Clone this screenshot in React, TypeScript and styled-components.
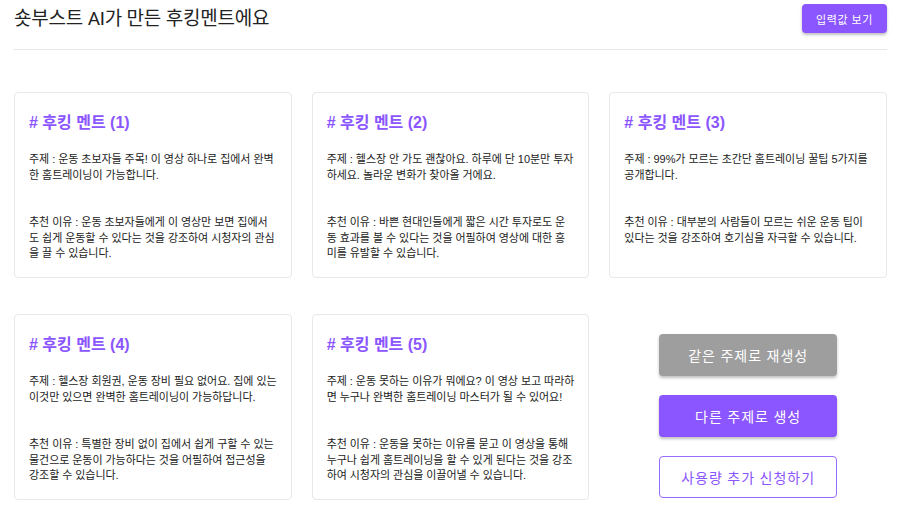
import React from "react";
import styled, { createGlobalStyle } from "styled-components";

interface Hook {
    topic: string;
    reason: string;
}

const hooks: Hook[] = [
    {
        topic: "운동 초보자들 주목! 이 영상 하나로 집에서 완벽한 홈트레이닝이 가능합니다.",
        reason: "운동 초보자들에게 이 영상만 보면 집에서도 쉽게 운동할 수 있다는 것을 강조하여 시청자의 관심을 끌 수 있습니다.",
    },
    {
        topic: "헬스장 안 가도 괜찮아요. 하루에 단 10분만 투자하세요. 놀라운 변화가 찾아올 거에요.",
        reason: "바쁜 현대인들에게 짧은 시간 투자로도 운동 효과를 볼 수 있다는 것을 어필하여 영상에 대한 흥미를 유발할 수 있습니다.",
    },
    {
        topic: "99%가 모르는 초간단 홈트레이닝 꿀팁 5가지를 공개합니다.",
        reason: "대부분의 사람들이 모르는 쉬운 운동 팁이 있다는 것을 강조하여 호기심을 자극할 수 있습니다.",
    },
    {
        topic: "헬스장 회원권, 운동 장비 필요 없어요. 집에 있는 이것만 있으면 완벽한 홈트레이닝이 가능하답니다.",
        reason: "특별한 장비 없이 집에서 쉽게 구할 수 있는 물건으로 운동이 가능하다는 것을 어필하여 접근성을 강조할 수 있습니다.",
    },
    {
        topic: "운동 못하는 이유가 뭐에요? 이 영상 보고 따라하면 누구나 완벽한 홈트레이닝 마스터가 될 수 있어요!",
        reason: "운동을 못하는 이유를 묻고 이 영상을 통해 누구나 쉽게 홈트레이닝을 할 수 있게 된다는 것을 강조하여 시청자의 관심을 이끌어낼 수 있습니다.",
    },
];

const GlobalStyle = createGlobalStyle`
    body {
        margin: 0;
        background: #ffffff;
        font-family: Roboto, "Noto Sans CJK KR", sans-serif;
    }
`;

const Page = styled.div`
    width: 873px;
    padding: 0 17px 0 14px;
`;

const Header = styled.header`
    display: flex;
    justify-content: space-between;
    align-items: flex-start;
    padding: 4px 0 16px;
    border-bottom: 1px solid #e6e6e6;
`;

const Title = styled.h1`
    margin: 3px 0 0;
    font-size: 19px;
    font-weight: 400;
    letter-spacing: -0.2px;
    color: #222222;
    line-height: 24px;
`;

const SmallButton = styled.button`
    height: 29px;
    padding: 0 14px;
    border: none;
    border-radius: 4px;
    background: #8b55ff;
    color: #ffffff;
    font-family: Roboto, "Noto Sans CJK KR", sans-serif;
    font-size: 11px;
    letter-spacing: 0.6px;
    box-shadow: 0 2px 3px rgba(0, 0, 0, 0.25);
`;

const Grid = styled.div`
    display: grid;
    grid-template-columns: repeat(3, 1fr);
    column-gap: 20px;
    row-gap: 36px;
    margin-top: 42px;
`;

const Card = styled.div`
    height: 186px;
    box-sizing: border-box;
    padding: 20px 14px 14px;
    border: 1px solid #e8e8e8;
    border-radius: 4px;
    font-family: "Liberation Sans", "Noto Sans CJK KR", sans-serif;
`;

const CardTitle = styled.h3`
    margin: 0 0 19px;
    font-size: 16px;
    line-height: 20px;
    font-weight: 700;
    color: #8b55ff;
`;

const CardText = styled.p<{ gap?: number }>`
    margin: ${(props) => (props.gap ? `${props.gap}px` : "0")} 0 0;
    font-size: 11px;
    line-height: 15.5px;
    letter-spacing: -0.05px;
    color: #222222;
    word-break: break-all;
`;

const Actions = styled.div`
    display: flex;
    flex-direction: column;
    align-items: center;
    justify-content: center;
    gap: 19px;
    padding-top: 18px;
`;

const ActionButton = styled.button<{ variant: "gray" | "purple" | "outline" }>`
    width: 178px;
    height: 42px;
    border-radius: 4px;
    font-family: Roboto, "Noto Sans CJK KR", sans-serif;
    font-size: 14px;
    letter-spacing: 1px;
    cursor: pointer;
    border: 1px solid
        ${(props) => (props.variant === "outline" ? "#9a6bff" : "transparent")};
    background: ${(props) =>
        props.variant === "gray"
            ? "#9e9e9e"
            : props.variant === "purple"
            ? "#8b55ff"
            : "#ffffff"};
    color: ${(props) => (props.variant === "outline" ? "#8b55ff" : "#ffffff")};
    box-shadow: ${(props) =>
        props.variant === "outline" ? "none" : "0 2px 3px rgba(0, 0, 0, 0.25)"};
`;

export default function App() {
    return (
        <>
            <GlobalStyle />
            <Page>
                <Header>
                    <Title>숏부스트 AI가 만든 후킹멘트에요</Title>
                    <SmallButton>입력값 보기</SmallButton>
                </Header>
                <Grid>
                    {hooks.map((hook, i) => (
                        <Card key={i}>
                            <CardTitle># 후킹 멘트 ({i + 1})</CardTitle>
                            <CardText>주제 : {hook.topic}</CardText>
                            <CardText gap={32}>추천 이유 : {hook.reason}</CardText>
                        </Card>
                    ))}
                    <Actions>
                        <ActionButton variant="gray">같은 주제로 재생성</ActionButton>
                        <ActionButton variant="purple">다른 주제로 생성</ActionButton>
                        <ActionButton variant="outline">사용량 추가 신청하기</ActionButton>
                    </Actions>
                </Grid>
            </Page>
        </>
    );
}
